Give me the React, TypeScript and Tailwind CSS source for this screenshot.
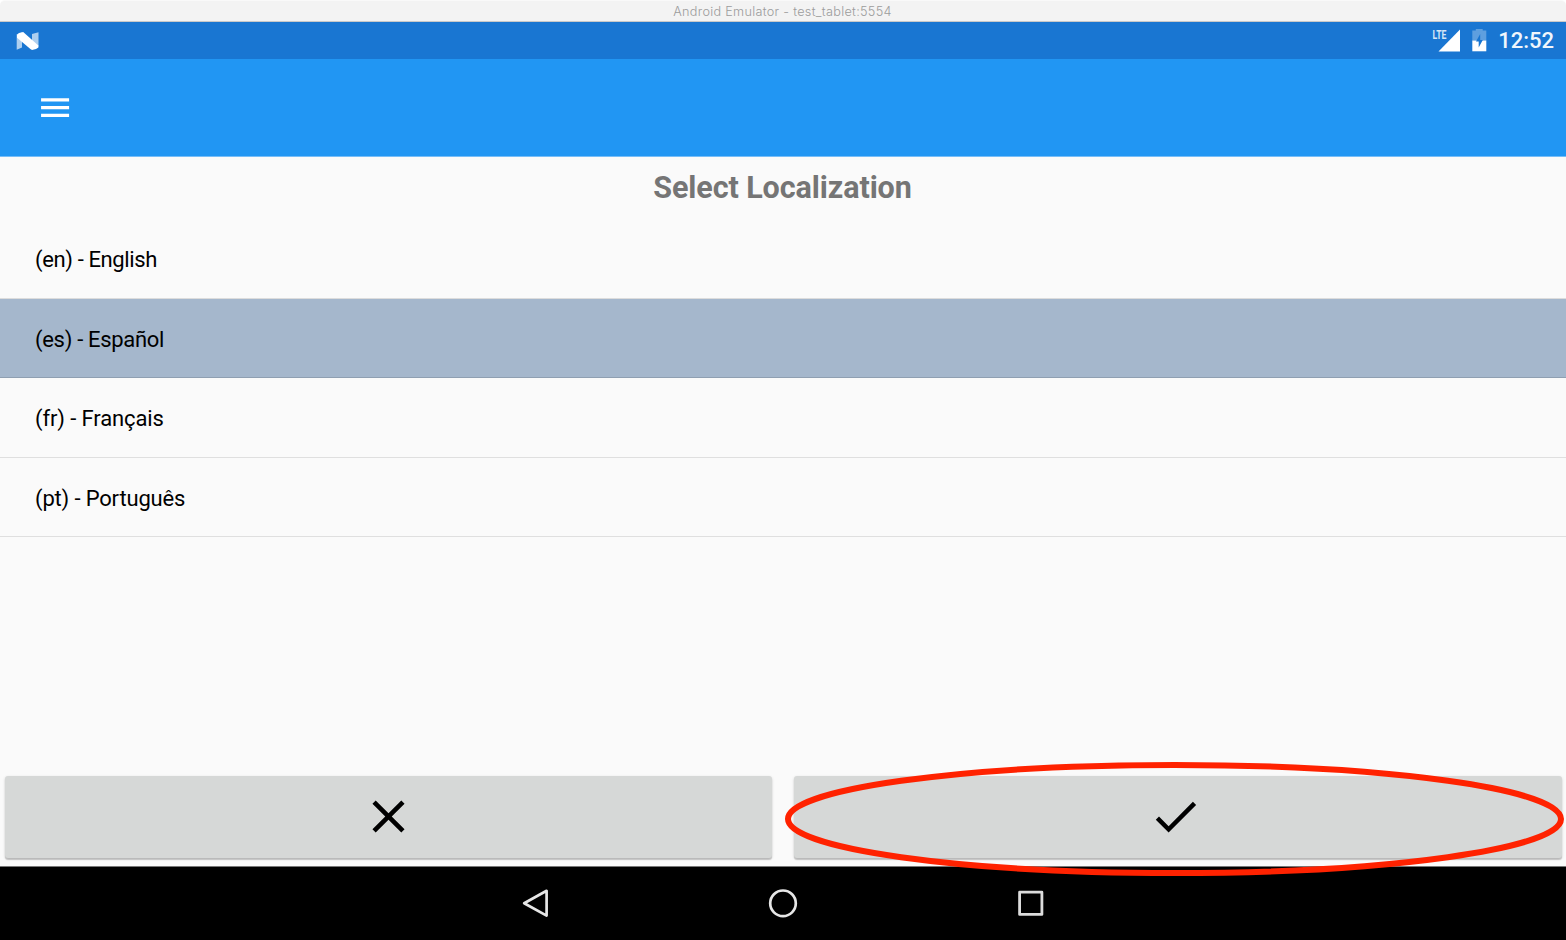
const locales = [
  { code: 'en', name: 'English', row: 'h-20 bg-[#fafafa] border-[#dcdcdc] pt-[2px] tracking-[-0.37px]' },
  { code: 'es', name: 'Español', row: 'h-[79px] bg-[#a5b7cc] border-[#8f9fb1] pt-[3px] tracking-[-0.31px]' },
  { code: 'fr', name: 'Français', row: 'h-20 bg-[#fafafa] border-[#dfdfdf] pt-[2px] tracking-[-0.12px]' },
  { code: 'pt', name: 'Português', row: 'h-[79px] bg-[#fafafa] border-[#dfdfdf] pt-[3px] tracking-[-0.16px]' },
];

function TitleBar() {
  return (
    <div className="bg-white">
      <div className="flex h-[22px] items-center justify-center rounded-t-[5px] border-t border-b border-t-[#f9f9f9] border-b-[#c9c9c9] bg-[#f3f3f3] pt-[2px] pr-[1px] font-['Inter',sans-serif] text-[12.7px] leading-none font-light tracking-[0.3px] text-[#9c9c9c]">
        Android Emulator - test_tablet:5554
      </div>
    </div>
  );
}

function StatusBar() {
  return (
    <div className="flex h-[37px] items-center bg-[#1976d2] pr-3 pl-[16px]">
      <svg className="h-[20px] w-[24px]" viewBox="0 0 24 20">
        <path d="M.7 3.2 6 1.5V16.5L.7 18.8ZM16 3 22.5 1.2V15.5L16 17Z" fill="#fff" fillOpacity=".65" />
        <path d="M1 4 3 2 7.2 1 22.4 14.6V16.4L20 18 16 18.9 14.4 18 1 6.8Z" fill="#fff" />
      </svg>
      <div className="ml-auto flex items-center">
        <svg className="h-[24px] w-[30px] overflow-visible" viewBox="0 0 30 24">
          <path d="M29 .5V22.5H7.5Z" fill="#fff" />
          <path d="M0 0H15.5V11.5H0Z" fill="#1976d2" />
          <text
            x="1.5"
            y="9.8"
            textLength="14"
            lengthAdjust="spacingAndGlyphs"
            className="font-['Roboto',sans-serif] text-[13px] font-bold"
            fill="#d6e6f6"
          >
            LTE
          </text>
        </svg>
        <svg className="ml-[10px] h-[24px] w-[16px]" viewBox="0 0 16 24">
          <path d="M1.3 1.5H4.8V-.5H11.7V1.5H15.3V12H1.3Z" fill="#fff" fillOpacity=".3" />
          <path d="M1.3 11.6H15.3V22.3H1.3Z" fill="#fff" />
          <path d="M9.2 5 5 12.6H7.7V18.6L11.8 11H9.2Z" fill="#1976d2" />
        </svg>
        <span className="ml-[11px] font-['Roboto',sans-serif] text-[22px] leading-none font-medium text-[#f0f6fc]">12:52</span>
      </div>
    </div>
  );
}

function AppBar() {
  return (
    <header className="flex h-[98px] items-center border-b border-[#76bdf8] bg-[#2196f3] pl-[36px]">
      <button aria-label="Menu">
        <svg className="block size-[38px]" viewBox="0 0 24 24" fill="#fff">
          <path d="M3.2 17.7h17.7v-2H3.2v2zm0-4.9h17.7v-2H3.2v2zm0-6.9v2h17.7v-2H3.2z" />
        </svg>
      </button>
    </header>
  );
}

function NavBar() {
  return (
    <nav className="flex h-[74px] items-center justify-center gap-[219px] border-t border-[#777] bg-black pb-[1px]">
      <svg className="size-7" viewBox="0 0 28 28" fill="none" stroke="#e6e6e6" strokeWidth="2.7" strokeLinejoin="round">
        <path d="M25.6 1.8V26.6L3.2 14.2Z" />
      </svg>
      <svg className="size-[30px]" viewBox="0 0 30 30" fill="none" stroke="#e6e6e6" strokeWidth="2.7">
        <circle cx="15" cy="15.3" r="12.8" />
      </svg>
      <svg className="size-7" viewBox="0 0 28 28" fill="none" stroke="#dcdcdc" strokeWidth="2.8" strokeLinejoin="round">
        <path d="M2.6 3.2H24.9V25.4H2.6Z" />
      </svg>
    </nav>
  );
}

const buttonClass =
  'flex h-[82px] items-center justify-center rounded-[3px] bg-[#d6d8d7] pb-[2px] shadow-[0_2px_1px_rgba(0,0,0,0.17),0_1px_3px_rgba(0,0,0,0.16)]';

export default function App() {
  return (
    <div className="relative flex h-[940px] w-[1566px] flex-col overflow-hidden bg-[#fafafa]">
      <TitleBar />
      <StatusBar />
      <AppBar />
      <main className="flex flex-1 flex-col font-['Roboto',sans-serif]">
        <h1 className="flex h-[62px] items-center justify-center pr-[1px] text-[30.5px] leading-none font-bold tracking-[-0.09px] text-[#757575]">
          Select Localization
        </h1>
        <ul>
          {locales.map((l) => (
            <li key={l.code} className={`flex items-center border-b pl-[35px] text-[22px] leading-none text-black ${l.row}`}>
              ({l.code}) - {l.name}
            </li>
          ))}
        </ul>
        <div className="mt-auto flex gap-[21.5px] pr-[4.5px] pb-[8px] pl-[5px]">
          <button aria-label="Cancel" className={`w-[767px] ${buttonClass}`}>
            <svg className="size-[55px]" viewBox="0 0 24 24">
              <path d="M19 6.41L17.59 5 12 10.59 6.41 5 5 6.41 10.59 12 5 17.59 6.41 19 12 13.41 17.59 19 19 17.59 13.41 12z" />
            </svg>
          </button>
          <button aria-label="Confirm" className={`flex-1 pr-[4px] ${buttonClass}`}>
            <svg className="size-[55px]" viewBox="0 0 24 24">
              <path d="M9 16.2L4.8 12l-1.4 1.4L9 19 21 7l-1.4-1.4L9 16.2z" />
            </svg>
          </button>
        </div>
      </main>
      <NavBar />
      <svg className="pointer-events-none absolute top-[760px] left-[783px] h-[118px] w-[783px]" viewBox="0 0 783 118">
        <ellipse cx="391.5" cy="59" rx="386.5" ry="54" fill="none" stroke="#ff2200" strokeWidth="6" />
      </svg>
    </div>
  );
}
